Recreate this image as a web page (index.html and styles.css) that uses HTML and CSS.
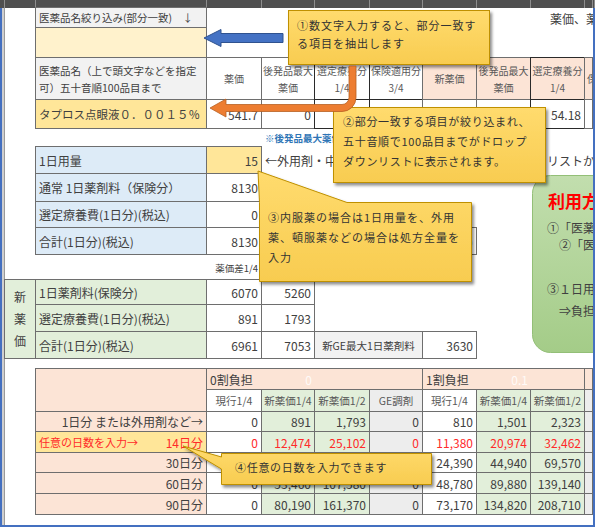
FILE: index.html
```html
<!DOCTYPE html>
<html lang="ja">
<head>
<meta charset="utf-8">
<title>薬価計算</title>
<link rel="stylesheet" href="styles.css">
</head>
<body>
<div class="window">
  <div class="topbar"><span></span><span></span><span></span><span></span><span></span><span></span><span></span><span></span><span></span><span></span><span></span><span></span></div>
  <div class="main">
    <div class="edge"></div>
    <div class="strip"></div>
    <div class="sheet">
      <!-- r1 -->
      <div></div>
      <div class="c gry lb1">医薬品名絞り込み(部分一致)　↓</div>
      <div class="s6"></div>
      <div class="free pr">薬価、薬価差</div>
      <div></div>
      <!-- r2 -->
      <div></div>
      <div class="c ylw2"></div>
      <div class="s8"></div>
      <!-- r3 -->
      <div></div>
      <div class="c gry lb2">医薬品名（上で頭文字などを指定<br>可）五十音順100品目まで</div>
      <div class="c hd">薬価</div>
      <div class="c hd">後発品最大<br>薬価</div>
      <div class="c hd dk">選定療養分<br>1/4</div>
      <div class="c hd dk">保険適用分<br>3/4</div>
      <div class="c hd pnk">新薬価</div>
      <div class="c hd pnk">後発品最大<br>薬価</div>
      <div class="c hd pnk dk">選定療養分<br>1/4</div>
      <div class="c hd pnk jl">保険</div>
      <!-- r4 -->
      <div></div>
      <div class="c ylw nm">タプロス点眼液０．００１５％</div>
      <div class="c num">541.7</div>
      <div class="c num">0</div>
      <div class="c num dk"></div>
      <div class="c num dk"></div>
      <div class="c num"></div>
      <div class="c num"></div>
      <div class="c num dk">54.18</div>
      <div class="c"></div>
      <!-- r5 -->
      <div></div><div></div><div></div>
      <div class="s7 memo">※後発品最大薬価</div>
      <!-- r6 -->
      <div></div>
      <div class="c blu">1日用量</div>
      <div class="c ylw num">15</div>
      <div class="s5 free">←外用剤・中</div>
      <div class="free pl">リストから選択</div>
      <div></div>
      <!-- r7 -->
      <div></div>
      <div class="c blu">通常 1日薬剤料（保険分）</div>
      <div class="c num">8130</div>
      <div class="s7"></div>
      <!-- r8 -->
      <div></div>
      <div class="c blu">選定療養費(1日分)(税込)</div>
      <div class="c num">0</div>
      <div class="s7"></div>
      <!-- r9 -->
      <div></div>
      <div class="c blu">合計(1日分)(税込)</div>
      <div class="c num">8130</div>
      <div class="s3"></div>
      <div class="c num">)</div>
      <div class="s3"></div>
      <!-- r10 -->
      <div></div><div></div>
      <div class="small">薬価差1/4</div>
      <div class="s7"></div>
      <!-- r11 -->
      <div class="c grn r3 vt">新<br>薬<br>価</div>
      <div class="c grn">1日薬剤料(保険分)</div>
      <div class="c num">6070</div>
      <div class="c num">5260</div>
      <div class="s6"></div>
      <!-- r12 -->
      <div class="c grn">選定療養費(1日分)(税込)</div>
      <div class="c num">891</div>
      <div class="c num">1793</div>
      <div class="s6"></div>
      <!-- r13 -->
      <div class="c grn">合計(1日分)(税込)</div>
      <div class="c num">6961</div>
      <div class="c num">7053</div>
      <div class="c gry s2 ge">新GE最大1日薬剤料</div>
      <div class="c num">3630</div>
      <div class="s3"></div>
      <!-- r14 -->
      <div class="s10"></div>
      <!-- r15 -->
      <div></div>
      <div class="c pnk r2"></div>
      <div class="c pnk s4 band b4"><span>0割負担</span><span class="ghost">0</span><span></span><span></span></div>
      <div class="c pnk s3 band b3"><span>1割負担</span><span class="ghost">0.1</span><span></span></div>
      <div class="c pnk"></div>
      <!-- r16 -->
      <div></div>
      <div class="c sub">現行1/4</div>
      <div class="c sub grn">新薬価1/4</div>
      <div class="c sub grn">新薬価1/2</div>
      <div class="c sub gr2">GE調剤</div>
      <div class="c sub">現行1/4</div>
      <div class="c sub grn">新薬価1/4</div>
      <div class="c sub grn">新薬価1/2</div>
      <div class="c gr2"></div>
      <!-- r17 -->
      <div></div>
      <div class="c pnk num">1日分 または外用剤など→</div>
      <div class="c num">0</div>
      <div class="c num grn">891</div>
      <div class="c num grn">1,793</div>
      <div class="c num gr2">0</div>
      <div class="c num">810</div>
      <div class="c num grn">1,501</div>
      <div class="c num grn">2,323</div>
      <div class="c gr2"></div>
      <!-- r18 -->
      <div></div>
      <div class="c ylw red split"><span class="hint">任意の日数を入力→</span><span>14日分</span></div>
      <div class="c num red">0</div>
      <div class="c num grn red">12,474</div>
      <div class="c num grn red">25,102</div>
      <div class="c num gr2 red">0</div>
      <div class="c num red">11,380</div>
      <div class="c num grn red">20,974</div>
      <div class="c num grn red">32,462</div>
      <div class="c gr2"></div>
      <!-- r19 -->
      <div></div>
      <div class="c pnk num">30日分</div>
      <div class="c num"></div>
      <div class="c num grn"></div>
      <div class="c num grn"></div>
      <div class="c num gr2"></div>
      <div class="c num">24,390</div>
      <div class="c num grn">44,940</div>
      <div class="c num grn">69,570</div>
      <div class="c gr2"></div>
      <!-- r20 -->
      <div></div>
      <div class="c pnk num">60日分</div>
      <div class="c num">0</div>
      <div class="c num grn">53,460</div>
      <div class="c num grn">107,580</div>
      <div class="c num gr2">0</div>
      <div class="c num">48,780</div>
      <div class="c num grn">89,880</div>
      <div class="c num grn">139,140</div>
      <div class="c gr2"></div>
      <!-- r21 -->
      <div></div>
      <div class="c pnk num">90日分</div>
      <div class="c num">0</div>
      <div class="c num grn">80,190</div>
      <div class="c num grn">161,370</div>
      <div class="c num gr2">0</div>
      <div class="c num">73,170</div>
      <div class="c num grn">134,820</div>
      <div class="c num grn">208,710</div>
      <div class="c gr2"></div>
      <!-- r22 -->
      <div class="s10"></div>
    </div>
    <div class="edge"></div>
  </div>
  <div class="edge-b"></div>

  <div class="overlay">
    <svg class="art" width="595" height="527" viewBox="0 0 595 527">
      <defs>
        <linearGradient id="yg" x1="0" y1="0" x2="0" y2="1">
          <stop offset="0" stop-color="#ffdb6e"/>
          <stop offset="1" stop-color="#f8cc50"/>
        </linearGradient>
        <linearGradient id="gg" x1="0" y1="0" x2="0" y2="1">
          <stop offset="0" stop-color="#c2deae"/>
          <stop offset="1" stop-color="#a4cc88"/>
        </linearGradient>
        <filter id="sh" x="-20%" y="-20%" width="140%" height="160%">
          <feDropShadow dx="2" dy="2.5" stdDeviation="1.4" flood-color="#000" flood-opacity="0.45"/>
        </filter>
      </defs>
      <rect x="532.5" y="175.5" width="90" height="177" rx="18" fill="url(#gg)" stroke="#93bf77"/>
      <polygon points="204,38 221,29.5 221,33.5 283,33.5 283,42.5 221,42.5 221,46.5" fill="#4472c4" stroke="#2f528f"/>
      <g fill="url(#yg)" stroke="#bf9000" filter="url(#sh)">
        <rect x="288.5" y="10.5" width="201" height="54"/>
        <rect x="333.5" y="107.5" width="212" height="75"/>
        <path d="M259.5,281.5 L259.5,202.5 L258,171 L347,202.5 L471.5,202.5 L471.5,281.5 Z"/>
        <path d="M221.5,453.5 L431.5,453.5 L431.5,484.5 L221.5,484.5 L221.5,469 L183,446 L221.5,457 Z"/>
      </g>
      <path d="M349,66 L356,66 L356,97.5 A14,14 0 0 1 342,111.5 L226,111.5 L226,117 L210,108 L226,99 L226,104.5 L342,104.5 A7,7 0 0 0 349,97.5 Z" fill="#ed7d31" stroke="#b85f22" stroke-width="0.8"/>
    </svg>
    <div class="note n1">①数文字入力すると、部分一致す<br>る項目を抽出します</div>
    <div class="note n2">②部分一致する項目が絞り込まれ、<br>五十音順で100品目までがドロップ<br>ダウンリストに表示されます。</div>
    <div class="note n3">③内服薬の場合は1日用量を、外用<br>薬、頓服薬などの場合は処方全量を<br>入力</div>
    <div class="note n4">④任意の日数を入力できます</div>
    <div class="gtxt g1">利用方法</div>
    <div class="gtxt g2">①「医薬品名絞り込み」に入力</div>
    <div class="gtxt g3">②「医薬品名」を選択</div>
    <div class="gtxt g4">③１日用量を入力</div>
    <div class="gtxt g5">⇒負担額を確認</div>
  </div>
</div>
</body>
</html>
```

FILE: styles.css
```css
* { box-sizing: border-box; margin: 0; padding: 0; }
html, body { width: 595px; height: 527px; overflow: hidden; background: #fff; }
body {
  font-family: "Noto Sans CJK JP", "Noto Sans", sans-serif;
  color: #404040;
  font-size: 12px;
}
.window {
  position: relative;
  width: 595px;
  height: 527px;
  overflow: hidden;
  display: flex;
  flex-direction: column;
}
.topbar {
  height: 8px;
  flex: none;
  background: #4f4f4f;
  display: grid;
  grid-template-columns: 5px 31px 171px 55px 53px 55px 53px 54px 54px 54px 8px 2px;
}
.topbar span { border-right: 1px solid #8d8d8d; }
.main { display: flex; height: 517px; flex: none; }
.edge { width: 2px; background: #4470c0; }
.strip { width: 3px; background: #cfcfcf; border-right: 1px solid #9a9a9a; }
.edge-b { height: 2px; background: #4470c0; flex: none; }

.sheet {
  width: 588px;
  display: grid;
  grid-template-columns: 31px 171px 55px 53px 55px 53px 54px 54px 54px 8px;
  grid-template-rows: 20px 30px 42px 29px 18px 27px 28px 26px 27px 25px 25px 27px 27px 10px 21px 22px 20px 21px 20px 21px 21px 10px;
}
.s2 { grid-column: span 2; }
.s3 { grid-column: span 3; }
.s4 { grid-column: span 4; }
.s5 { grid-column: span 5; }
.s6 { grid-column: span 6; }
.s7 { grid-column: span 7; }
.s8 { grid-column: span 8; }
.s10 { grid-column: span 10; }
.r2 { grid-row: span 2; }
.r3 { grid-row: span 3; }

.c {
  border: 1px solid #6e6e6e;
  margin: -1px 0 0 -1px;
  display: flex;
  align-items: center;
  padding: 0 3px;
  white-space: nowrap;
  overflow: hidden;
  min-width: 0;
}
.dk { border-color: #2a2a2a; }
.num { justify-content: flex-end; }
.gry { background: #f2f2f2; }
.ylw { background: #ffe699; }
.ylw2 { background: #fff2cc; }
.blu { background: #ddebf7; }
.grn { background: #e2efda; }
.pnk { background: #fce4d6; }
.gr2 { background: #ededed; }
.red { color: #ff2a2a; }

.lb1 { font-size: 10.5px; color: #404040; }
.lb2 { font-size: 10.5px; line-height: 17px; align-items: center; }
.nm { font-size: 11.5px; }
.hd {
  justify-content: center;
  text-align: center;
  font-size: 10px;
  line-height: 17px;
  color: #595959;
  padding: 0;
  overflow: visible;
}
.jl { justify-content: flex-start; padding-left: 2px; overflow: hidden; }

.free {
  display: flex;
  align-items: center;
  white-space: nowrap;
  overflow: visible;
  padding-left: 3px;
}
.pr { padding-left: 19px; }
.pl { padding-left: 16px; }
.memo {
  display: flex;
  align-items: center;
  padding-left: 3px;
  font-size: 9.5px;
  font-weight: bold;
  color: #2e75b6;
  white-space: nowrap;
  overflow: hidden;
}
.small {
  display: flex;
  align-items: center;
  justify-content: flex-end;
  padding-right: 4px;
  font-size: 9.5px;
  white-space: nowrap;
}
.vt {
  justify-content: center;
  text-align: center;
  line-height: 22px;
  padding: 0;
}
.ge { justify-content: center; font-size: 10.5px; color: #404040; }

.band { padding: 0; display: grid; align-items: center; overflow: visible; }
.b4 { grid-template-columns: 55px 53px 55px 53px; }
.b3 { grid-template-columns: 54px 54px 54px; }
.band span { white-space: nowrap; overflow: visible; }
.band span:first-child { padding-left: 3px; font-size: 12px; }
.band .ghost { text-align: right; padding-right: 3px; color: rgba(255, 255, 255, 0.85); }
.sub { justify-content: center; font-size: 10.5px; color: #595959; padding: 0; }
.split { justify-content: space-between; }
.hint { font-size: 11px; }

.overlay {
  position: absolute;
  left: 0;
  top: 0;
  width: 593px;
  height: 525px;
  overflow: hidden;
  pointer-events: none;
}
.art { position: absolute; left: 0; top: 0; }
.note {
  position: absolute;
  font-size: 11px;
  line-height: 20px;
  letter-spacing: 0.7px;
  color: #333;
  white-space: nowrap;
}
.n1 { left: 297px; top: 16px; line-height: 18px; letter-spacing: 1px; }
.n2 { left: 343px; top: 111px; }
.n3 { left: 268px; top: 207px; letter-spacing: 1px; }
.n4 { left: 235px; top: 457px; }
.gtxt {
  position: absolute;
  white-space: nowrap;
  font-size: 12px;
  line-height: 16px;
  color: #404040;
}
.g1 { left: 548px; top: 191px; font-size: 17px; line-height: 20px; font-weight: bold; color: #ff0000; }
.g2 { left: 547px; top: 220px; }
.g3 { left: 559px; top: 237px; }
.g4 { left: 547px; top: 281px; }
.g5 { left: 559px; top: 303px; }
```
